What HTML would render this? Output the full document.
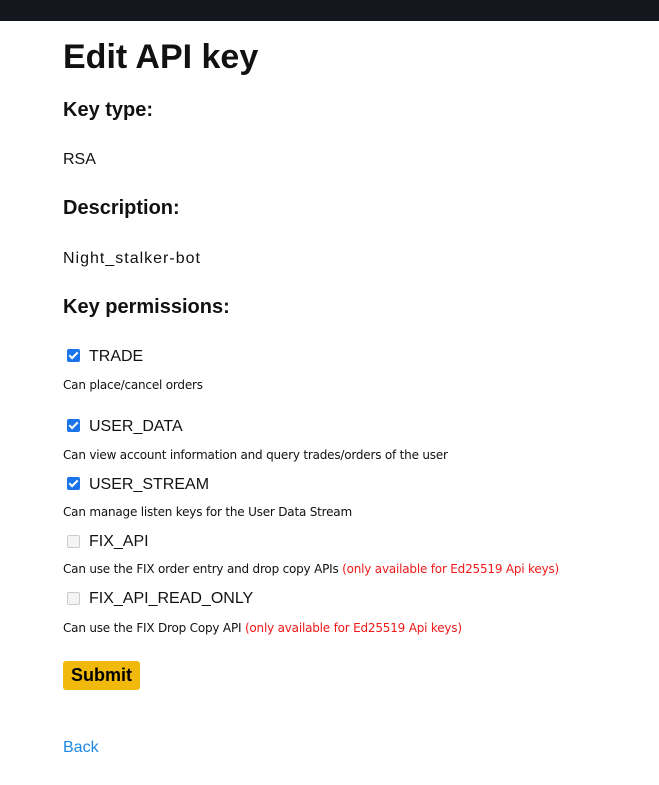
<!DOCTYPE html>
<html><head><meta charset="utf-8"><style>
body{margin:0;width:659px;height:785px;background:#fff;font-family:"Liberation Sans",sans-serif;color:#111;position:relative;overflow:hidden}
.bar{position:absolute;left:0;top:0;width:659px;height:21px;background:#14181e}
.t{position:absolute;left:63px;white-space:nowrap}
h1{margin:0;font-size:34px;font-weight:bold;line-height:40px}
.h{font-size:20px;font-weight:bold;line-height:24px}
.b{font-size:16px;line-height:20px}
.s{font-size:12px;line-height:16px;font-family:"DejaVu Sans",sans-serif;letter-spacing:-0.2px}
.r{color:#f01818}
.cb{position:absolute;left:67px;width:13px;height:13px;border-radius:2px;box-sizing:border-box}
.on{background:#1a73e8}
.on:after{content:"";position:absolute;left:4px;top:1px;width:3px;height:7px;border:solid #fff;border-width:0 2px 2px 0;transform:rotate(45deg)}
.off{border:1px solid #ccc;background:#f4f4f4}
.lab{position:absolute;left:89px;font-size:16px;line-height:20px}
.btn{position:absolute;left:63px;top:661px;width:77px;height:29px;background:#f0b90b;border-radius:3px;font-weight:bold;font-size:18px;line-height:29px;text-align:center;color:#000}
.back{color:#1e88e5}
</style></head><body>
<div class="bar"></div>
<h1 class="t" style="top:37px">Edit API key</h1>
<div class="t h" style="top:98px">Key type:</div>
<div class="t b" style="top:150px">RSA</div>
<div class="t h" style="top:196px">Description:</div>
<div class="t b" style="top:249px;letter-spacing:1px">Night_stalker-bot</div>
<div class="t h" style="top:295px">Key permissions:</div>

<div class="cb on" style="top:349px"></div><div class="lab" style="top:347px">TRADE</div>
<div class="t s" style="top:377px">Can place/cancel orders</div>
<div class="cb on" style="top:419px"></div><div class="lab" style="top:417px">USER_DATA</div>
<div class="t s" style="top:447px">Can view account information and query trades/orders of the user</div>
<div class="cb on" style="top:477px"></div><div class="lab" style="top:475px">USER_STREAM</div>
<div class="t s" style="top:504px">Can manage listen keys for the User Data Stream</div>
<div class="cb off" style="top:535px"></div><div class="lab" style="top:532px">FIX_API</div>
<div class="t s" style="top:561px">Can use the FIX order entry and drop copy APIs <span class="r">(only available for Ed25519 Api keys)</span></div>
<div class="cb off" style="top:592px"></div><div class="lab" style="top:589px">FIX_API_READ_ONLY</div>
<div class="t s" style="top:620px">Can use the FIX Drop Copy API <span class="r">(only available for Ed25519 Api keys)</span></div>
<div class="btn">Submit</div>
<div class="t b back" style="top:738px">Back</div>
</body></html>
